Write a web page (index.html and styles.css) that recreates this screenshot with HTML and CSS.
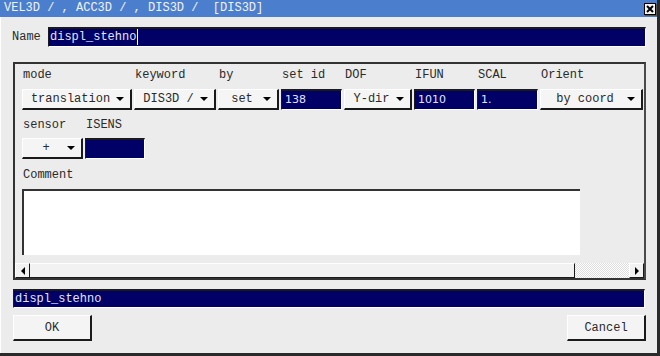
FILE: index.html
```html
<!DOCTYPE html>
<html lang="en">
<head>
    <meta charset="UTF-8">
    <title>DIS3D</title>
    <link rel="stylesheet" href="styles.css">
</head>
<body>
    <div class="window">
        <div class="titlebar">
            <span class="title">VEL3D / , ACC3D / , DIS3D /&nbsp; [DIS3D]</span>
            <span class="close">
                <svg width="8" height="8" viewBox="0 0 8 8"><path d="M1 1 L7 7 M7 1 L1 7" stroke="#000" stroke-width="2"/></svg>
            </span>
        </div>
        <div class="content">
            <div class="name-row">
                <span class="name-label">Name</span>
                <div class="field name-field">displ_stehno<span class="caret"></span></div>
            </div>

            <div class="panel">
                <div class="params">
                    <span class="lbl">mode</span>
                    <span class="lbl">keyword</span>
                    <span class="lbl">by</span>
                    <span class="lbl">set id</span>
                    <span class="lbl">DOF</span>
                    <span class="lbl">IFUN</span>
                    <span class="lbl">SCAL</span>
                    <span class="lbl">Orient</span>

                    <div class="drop"><span class="drop-text">translation</span><span class="arrow"></span></div>
                    <div class="drop"><span class="drop-text">DIS3D /</span><span class="arrow"></span></div>
                    <div class="drop"><span class="drop-text">set</span><span class="arrow"></span></div>
                    <div class="field num">138</div>
                    <div class="drop"><span class="drop-text">Y-dir</span><span class="arrow"></span></div>
                    <div class="field num">1010</div>
                    <div class="field num">1.</div>
                    <div class="drop"><span class="drop-text">by coord</span><span class="arrow"></span></div>
                </div>

                <div class="params sensor">
                    <span class="lbl">sensor</span>
                    <span class="lbl">ISENS</span>
                    <div class="drop"><span class="drop-text">+</span><span class="arrow"></span></div>
                    <div class="field num"></div>
                </div>

                <div class="lbl comment-label">Comment</div>
                <div class="comment"></div>

                <div class="hscroll">
                    <div class="sb-btn"><span class="arrow-left"></span></div>
                    <div class="sb-thumb"></div>
                    <div class="sb-track"></div>
                    <div class="sb-btn"><span class="arrow-right"></span></div>
                </div>
            </div>

            <div class="field status-field">displ_stehno</div>

            <div class="actions">
                <button class="btn">OK</button>
                <button class="btn">Cancel</button>
            </div>
        </div>
    </div>
</body>
</html>
```

FILE: styles.css
```css
body {
    margin: 0;
    padding: 0;
    background-color: #ececec;
    font-family: "Liberation Mono", "Courier New", monospace;
    font-size: 12px;
    color: #2a2a2a;
}
.window {
    width: 660px;
    height: 356px;
    box-sizing: border-box;
    background-color: #ececec;
    border-right: 3px solid #2a2a2a;
    border-bottom: 3px solid #2a2a2a;
    box-shadow: inset 1px 0 #ffffff;
}
.titlebar {
    height: 17px;
    background-color: #4b7fcd;
    display: flex;
    align-items: center;
    justify-content: space-between;
    padding: 0 1px 0 4px;
}
.title {
    color: #f2f2f2;
    white-space: pre;
    line-height: 17px;
}
.close {
    width: 10px;
    height: 10px;
    background-color: #f4f4f4;
    border: 1px solid #000;
    box-shadow: 1px 1px #555;
    display: flex;
    align-items: center;
    justify-content: center;
}
.content {
    padding: 0 11px 0 13px;
}
.name-row {
    display: flex;
    align-items: center;
    margin-top: 10px;
    height: 20px;
}
.name-label {
    width: 35px;
    margin-left: -1px;
}
.field {
    background-color: #000066;
    color: #e4e4ff;
    box-sizing: border-box;
    border-top: 2px solid #1a1a1a;
    border-left: 1px solid #1a1a1a;
    border-bottom: 1px solid #ffffff;
    border-right: 1px solid #ffffff;
}
.name-field {
    flex: 1;
    height: 20px;
    line-height: 17px;
    padding-left: 1px;
    margin-left: 1px;
    display: flex;
}
.caret {
    width: 1px;
    height: 16px;
    background-color: #ffffff;
    margin-left: 1px;
}
.panel {
    margin-top: 15px;
    height: 218px;
    box-sizing: border-box;
    border: 2px solid #333333;
    border-right-color: #4a4a4a;
    padding: 4px 0 0 7px;
}
.params {
    display: grid;
    grid-template-columns: 110px 82px 61px 61px 68px 61px 61px 103px;
    grid-template-rows: 21px 21px;
    column-gap: 2px;
}
.params.sensor {
    grid-template-columns: 61px 60px;
    grid-template-rows: 20px 21px;
    margin-top: 8px;
}
.lbl {
    line-height: 14px;
    padding-left: 1px;
}
.drop {
    background-color: #f5f5f5;
    box-sizing: border-box;
    border-top: 1px solid #ffffff;
    border-left: 1px solid #ffffff;
    border-right: 2px solid #1a1a1a;
    border-bottom: 2px solid #1a1a1a;
    display: flex;
    align-items: center;
    padding-right: 6px;
    padding-left: 2px;
}
.drop-text {
    flex: 1;
    text-align: center;
}
.arrow {
    width: 0;
    height: 0;
    border-left: 4px solid transparent;
    border-right: 4px solid transparent;
    border-top: 4px solid #000;
}
.num {
    font-family: "DejaVu Sans", Verdana, sans-serif;
    font-size: 11px;
    line-height: 18px;
    padding-left: 3px;
}
.comment-label {
    margin-top: 9px;
    height: 21px;
}
.comment {
    width: 558px;
    height: 66px;
    box-sizing: border-box;
    background-color: #ffffff;
    border-top: 2px solid #333333;
    border-left: 2px solid #333333;
}
.hscroll {
    display: flex;
    height: 15px;
    margin: 8px 0 0 -7px;
}
.sb-btn {
    width: 15px;
    box-sizing: border-box;
    background-color: #f2f2f2;
    border-top: 1px solid #ffffff;
    border-left: 1px solid #ffffff;
    border-right: 1px solid #1a1a1a;
    border-bottom: 1px solid #1a1a1a;
    display: flex;
    align-items: center;
    justify-content: center;
}
.sb-thumb {
    width: 545px;
    box-sizing: border-box;
    background-color: #f2f2f2;
    border-top: 1px solid #ffffff;
    border-right: 1px solid #1a1a1a;
    border-bottom: 1px solid #1a1a1a;
}
.sb-track {
    flex: 1;
    background: repeating-conic-gradient(#ffffff 0 25%, #dcdcdc 0 50%) 0 0 / 2px 2px;
}
.arrow-left {
    width: 0;
    height: 0;
    border-top: 4px solid transparent;
    border-bottom: 4px solid transparent;
    border-right: 4px solid #000;
}
.arrow-right {
    width: 0;
    height: 0;
    border-top: 4px solid transparent;
    border-bottom: 4px solid transparent;
    border-left: 4px solid #000;
}
.status-field {
    margin-top: 9px;
    height: 19px;
    line-height: 16px;
    padding-left: 1px;
    margin-right: 1px;
}
.actions {
    display: flex;
    justify-content: space-between;
    margin-top: 7px;
}
.btn {
    width: 79px;
    height: 26px;
    background-color: #f4f4f4;
    font-family: "Liberation Mono", "Courier New", monospace;
    font-size: 12px;
    color: #2a2a2a;
    border-top: 1px solid #ffffff;
    border-left: 1px solid #ffffff;
    border-right: 2px solid #1a1a1a;
    border-bottom: 2px solid #1a1a1a;
    padding: 0;
}
```
